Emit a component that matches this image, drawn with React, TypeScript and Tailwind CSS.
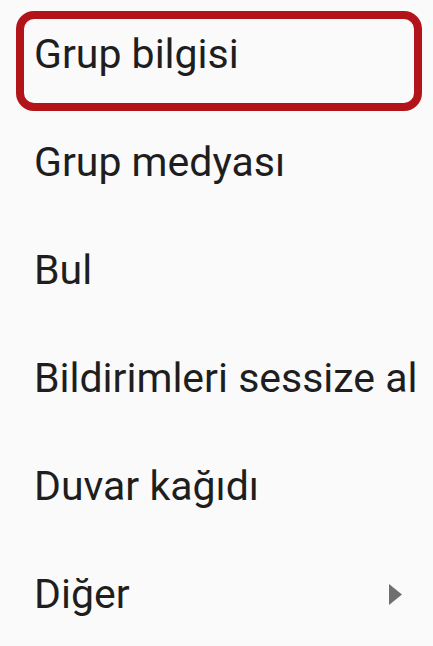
import React from 'react';

const items = [
  'Grup bilgisi',
  'Grup medyası',
  'Bul',
  'Bildirimleri sessize al',
  'Duvar kağıdı',
  'Diğer',
];

export default function App() {
  return (
    <div
      className="w-[433px] h-[646px] overflow-hidden bg-[#fafafa] text-[#1e1e1e]"
      style={{ fontFamily: 'Roboto, "Noto Sans", sans-serif' }}
    >
      {items.map((label, i) => (
        <div key={label} className="relative h-[108px] flex items-center pl-[34px] pr-[31px]">
          <span className="flex-1 text-[41px] leading-none whitespace-nowrap">{label}</span>
          {i === items.length - 1 && (
            <svg width="13" height="21" viewBox="0 0 13 21" className="shrink-0">
              <path d="M0 0 L13 10.5 L0 21 Z" fill="#6f6f6f" />
            </svg>
          )}
          {i === 0 && (
            <div className="absolute left-[16px] top-[11px] w-[406px] h-[100px] rounded-[18px] border-[8px] border-[#b3141a]" />
          )}
        </div>
      ))}
    </div>
  );
}
